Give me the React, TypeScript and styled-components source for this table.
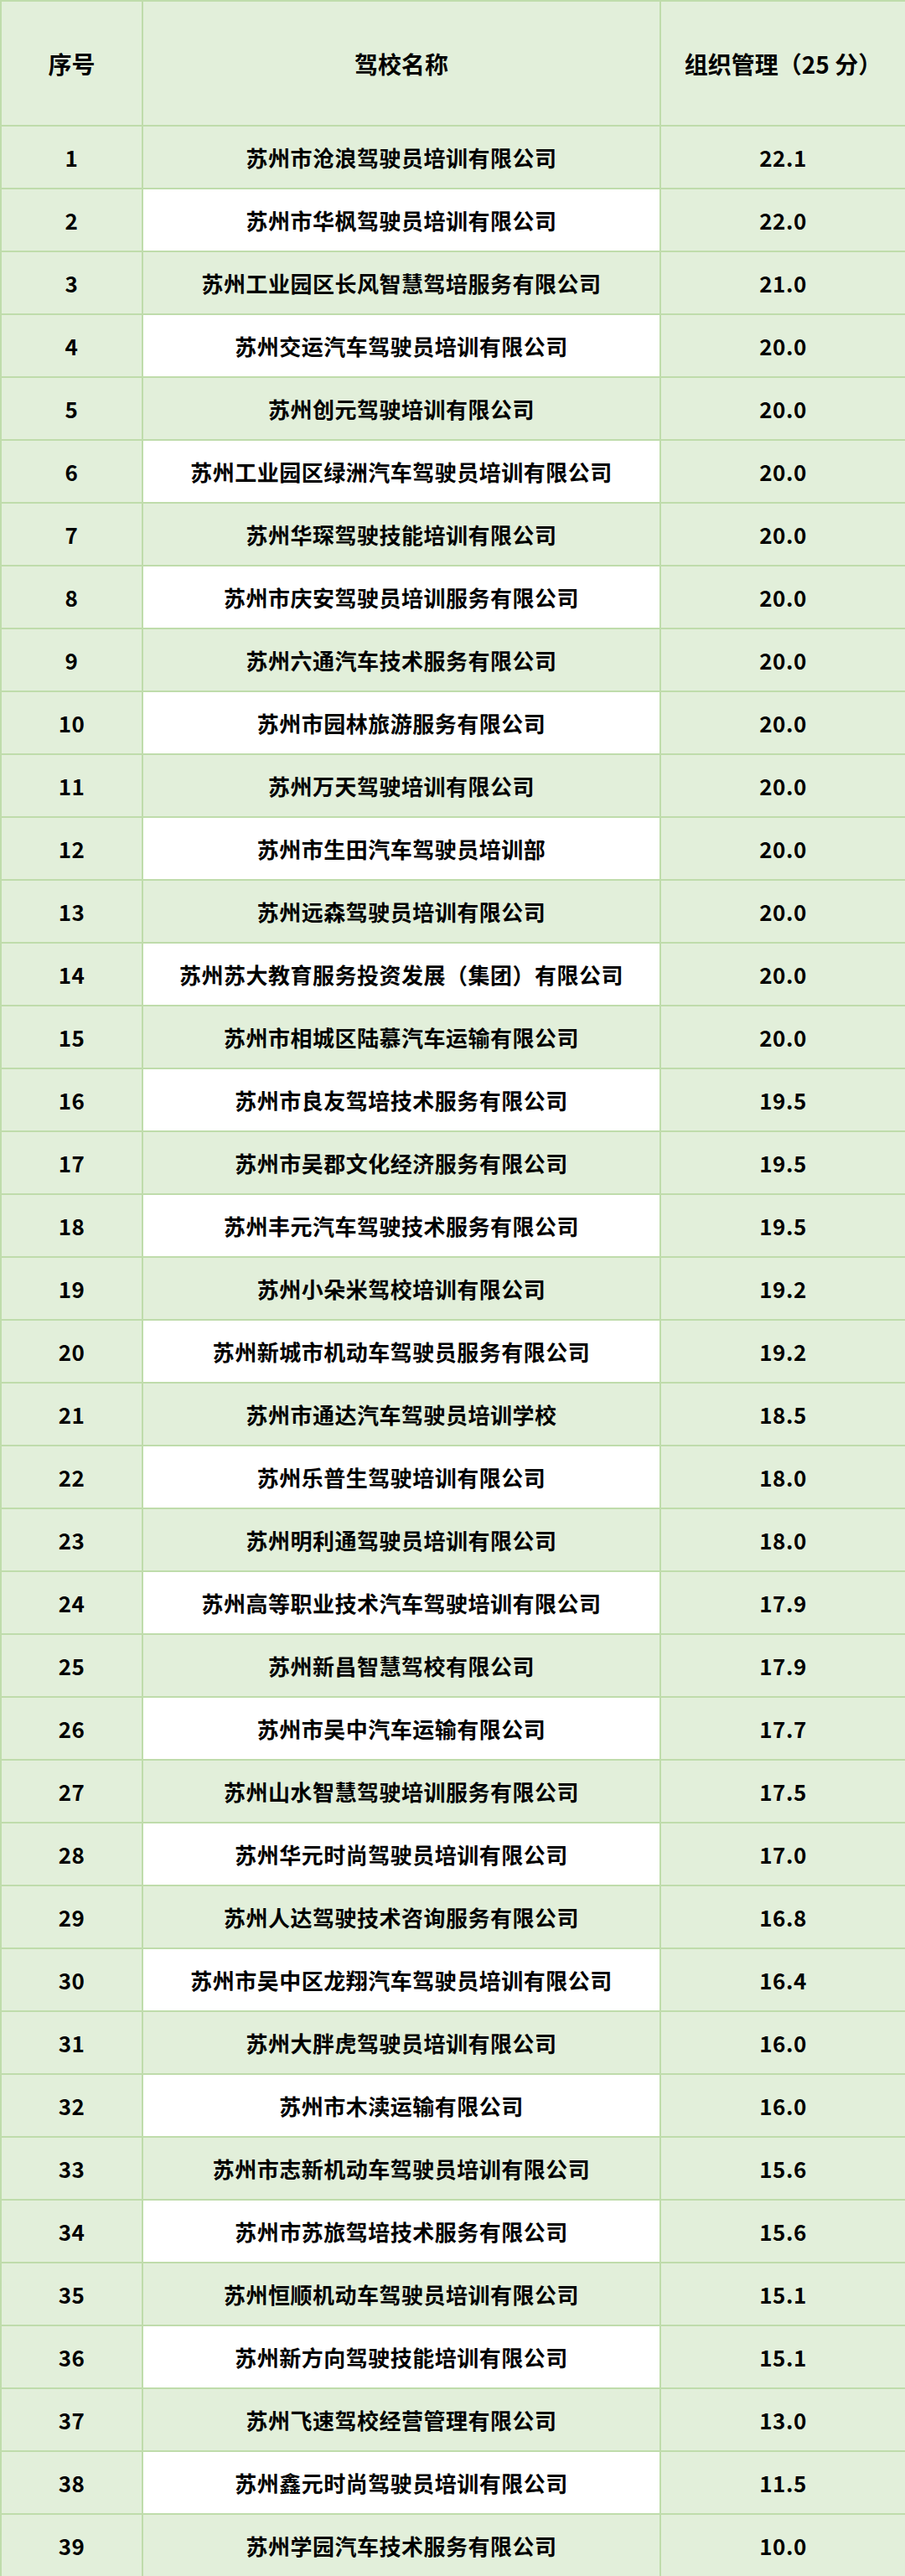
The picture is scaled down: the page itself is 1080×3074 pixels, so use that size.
import React from 'react';
import styled, { createGlobalStyle } from 'styled-components';

const GlobalStyle = createGlobalStyle`
    html, body {
        margin: 0;
        padding: 0;
        background: #ffffff;
    }
    body {
        font-family: "Noto Sans CJK SC", "Noto Sans", sans-serif;
    }
`;

const Table = styled.table`
    width: 1080px;
    table-layout: fixed;
    border-collapse: collapse;
    border: 2px solid #c3e0b1;
    color: #000;
    font-weight: 700;
`;

const Col = styled.col<{ $w: number }>`
    width: ${(props) => props.$w}px;
`;

const HeadRow = styled.tr`
    height: 149px;
`;

const Row = styled.tr`
    height: 75px;
`;

const HeadCell = styled.th`
    background: #e2efda;
    border: 2px solid #bfdcab;
    font-size: 28px;
    font-weight: 700;
    text-align: center;
    vertical-align: middle;
    padding: 0;
`;

const Cell = styled.td<{ $white?: boolean }>`
    background: ${(props) => (props.$white ? '#ffffff' : '#e2efda')};
    border: 2px solid #bfdcab;
    font-size: 26px;
    text-align: center;
    vertical-align: middle;
    padding: 0;
    letter-spacing: 0.5px;
`;

const schools: [string, string][] = [
    ['苏州市沧浪驾驶员培训有限公司', '22.1'],
    ['苏州市华枫驾驶员培训有限公司', '22.0'],
    ['苏州工业园区长风智慧驾培服务有限公司', '21.0'],
    ['苏州交运汽车驾驶员培训有限公司', '20.0'],
    ['苏州创元驾驶培训有限公司', '20.0'],
    ['苏州工业园区绿洲汽车驾驶员培训有限公司', '20.0'],
    ['苏州华琛驾驶技能培训有限公司', '20.0'],
    ['苏州市庆安驾驶员培训服务有限公司', '20.0'],
    ['苏州六通汽车技术服务有限公司', '20.0'],
    ['苏州市园林旅游服务有限公司', '20.0'],
    ['苏州万天驾驶培训有限公司', '20.0'],
    ['苏州市生田汽车驾驶员培训部', '20.0'],
    ['苏州远森驾驶员培训有限公司', '20.0'],
    ['苏州苏大教育服务投资发展（集团）有限公司', '20.0'],
    ['苏州市相城区陆慕汽车运输有限公司', '20.0'],
    ['苏州市良友驾培技术服务有限公司', '19.5'],
    ['苏州市吴郡文化经济服务有限公司', '19.5'],
    ['苏州丰元汽车驾驶技术服务有限公司', '19.5'],
    ['苏州小朵米驾校培训有限公司', '19.2'],
    ['苏州新城市机动车驾驶员服务有限公司', '19.2'],
    ['苏州市通达汽车驾驶员培训学校', '18.5'],
    ['苏州乐普生驾驶培训有限公司', '18.0'],
    ['苏州明利通驾驶员培训有限公司', '18.0'],
    ['苏州高等职业技术汽车驾驶培训有限公司', '17.9'],
    ['苏州新昌智慧驾校有限公司', '17.9'],
    ['苏州市吴中汽车运输有限公司', '17.7'],
    ['苏州山水智慧驾驶培训服务有限公司', '17.5'],
    ['苏州华元时尚驾驶员培训有限公司', '17.0'],
    ['苏州人达驾驶技术咨询服务有限公司', '16.8'],
    ['苏州市吴中区龙翔汽车驾驶员培训有限公司', '16.4'],
    ['苏州大胖虎驾驶员培训有限公司', '16.0'],
    ['苏州市木渎运输有限公司', '16.0'],
    ['苏州市志新机动车驾驶员培训有限公司', '15.6'],
    ['苏州市苏旅驾培技术服务有限公司', '15.6'],
    ['苏州恒顺机动车驾驶员培训有限公司', '15.1'],
    ['苏州新方向驾驶技能培训有限公司', '15.1'],
    ['苏州飞速驾校经营管理有限公司', '13.0'],
    ['苏州鑫元时尚驾驶员培训有限公司', '11.5'],
    ['苏州学园汽车技术服务有限公司', '10.0'],
];

const App: React.FC = () => {
    return (
        <>
            <GlobalStyle />
            <Table>
                <colgroup>
                    <Col $w={169} />
                    <Col $w={618} />
                    <Col $w={293} />
                </colgroup>
                <thead>
                    <HeadRow>
                        <HeadCell>序号</HeadCell>
                        <HeadCell>驾校名称</HeadCell>
                        <HeadCell>组织管理（25 分）</HeadCell>
                    </HeadRow>
                </thead>
                <tbody>
                    {schools.map(([name, score], i) => (
                        <Row key={name}>
                            <Cell>{i + 1}</Cell>
                            <Cell $white={i % 2 === 1}>{name}</Cell>
                            <Cell>{score}</Cell>
                        </Row>
                    ))}
                </tbody>
            </Table>
        </>
    );
};

export default App;
